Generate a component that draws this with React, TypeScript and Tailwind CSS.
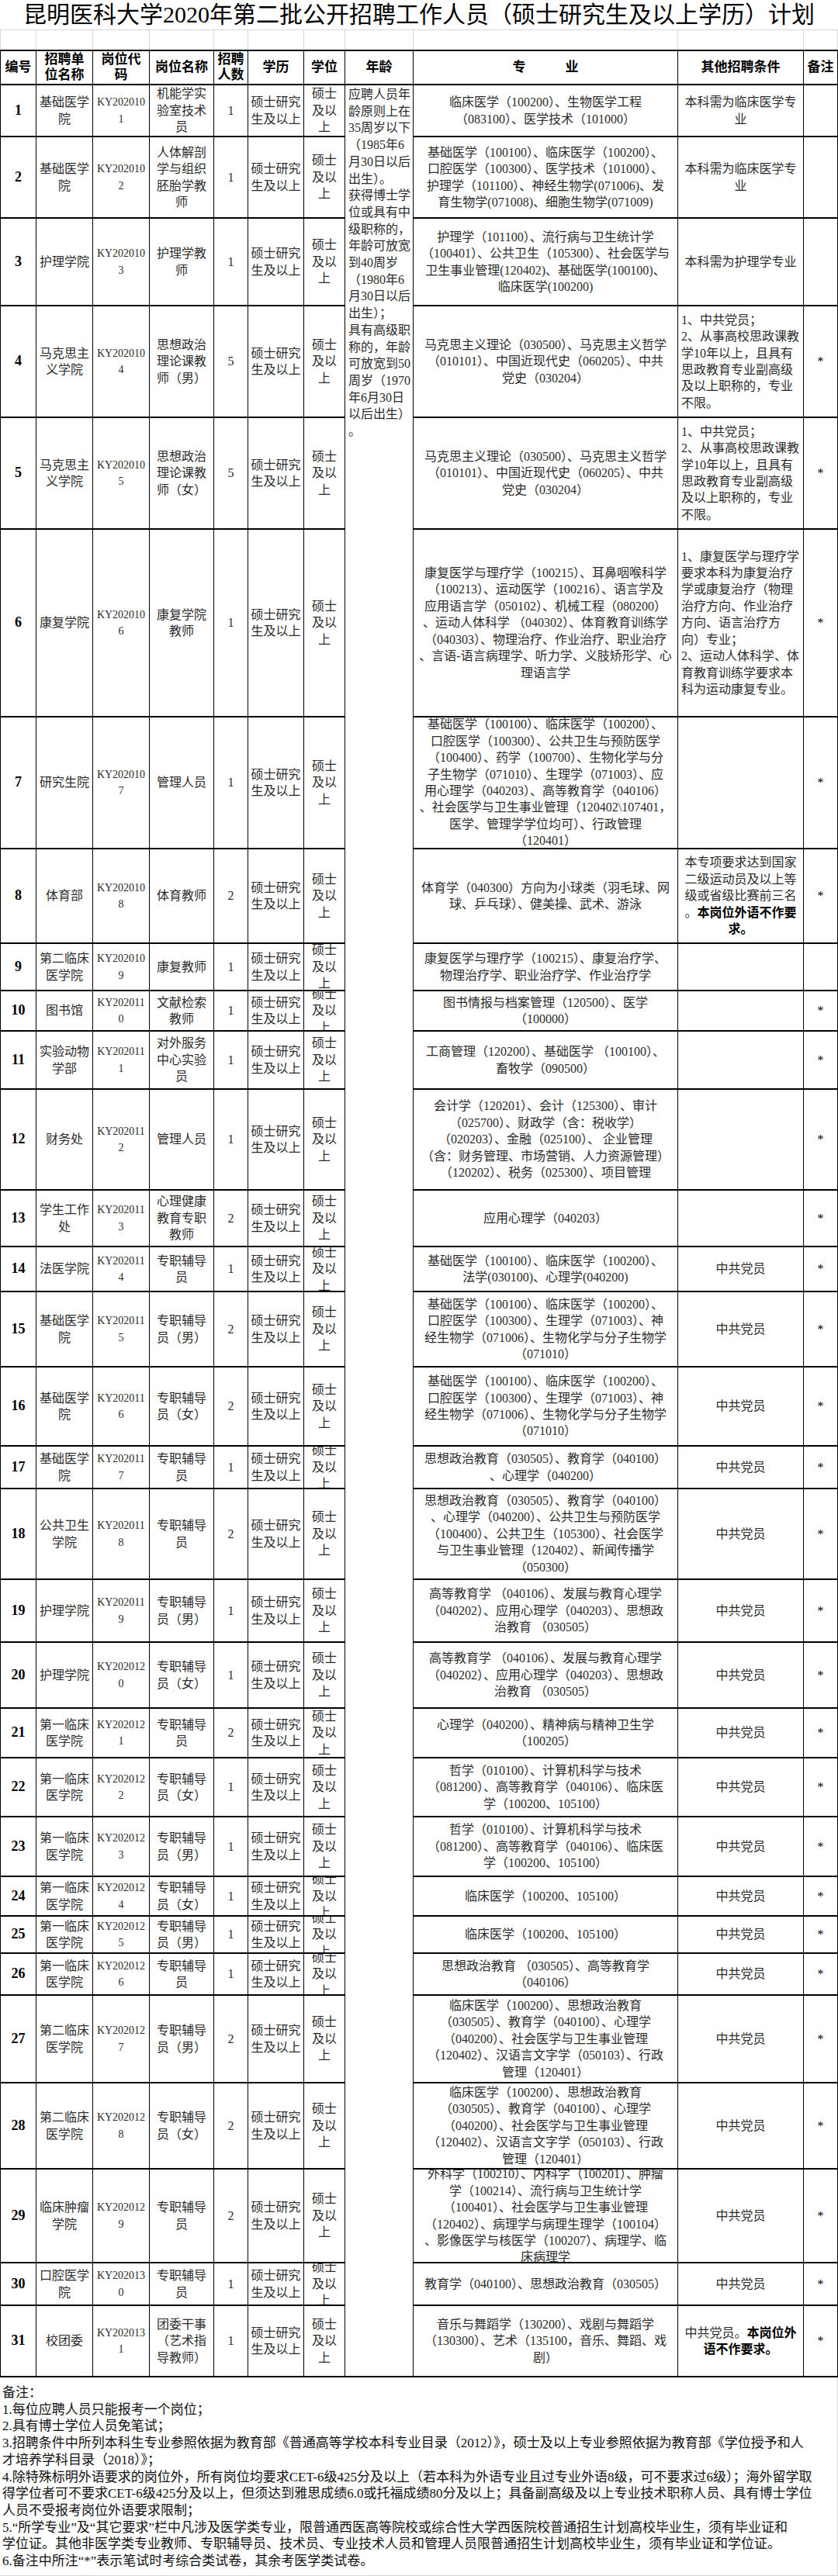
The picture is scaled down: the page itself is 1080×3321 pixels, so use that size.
import type { ReactNode } from "react";

type Post = {
  no: number;
  unit: string[];
  code: string[];
  name: string[];
  count: number;
  major: string[];
  other?: ReactNode[];
  otherLeft?: boolean;
  star?: boolean;
};

const EDU = ["硕士研究", "生及以上"];
const DEGREE = ["硕士", "及以", "上"];

const AGE_LINES = [
  "应聘人员年",
  "龄原则上在",
  "35周岁以下",
  "（1985年6",
  "月30日以后",
  "出生）。",
  "获得博士学",
  "位或具有中",
  "级职称的，",
  "年龄可放宽",
  "到40周岁",
  "（1980年6",
  "月30日以后",
  "出生）；",
  "具有高级职",
  "称的，年龄",
  "可放宽到50",
  "周岁（1970",
  "年6月30日",
  "以后出生）",
  "。",
];

const SZ_LEFT = [
  "1、中共党员；",
  "2、从事高校思政课教",
  "学10年以上，且具有",
  "思政教育专业副高级",
  "及以上职称的，专业",
  "不限。",
];

const MAKESI = [
  "马克思主义理论（030500）、马克思主义哲学",
  "（010101）、中国近现代史（060205）、中共",
  "党史（030204）",
];

const JICHU = [
  "基础医学（100100）、临床医学（100200）、",
  "口腔医学（100300）、生理学（071003）、神",
  "经生物学（071006）、生物化学与分子生物学",
  "（071010）",
];

const GAODENG = [
  "高等教育学 （040106）、发展与教育心理学",
  "（040202）、应用心理学（040203）、思想政",
  "治教育 （030505）",
];

const ZHEXUE = [
  "哲学（010100）、计算机科学与技术",
  "（081200）、高等教育学（040106）、临床医",
  "学（100200、105100）",
];

const ERLIN = [
  "临床医学（100200）、思想政治教育",
  "（030505）、教育学（040100）、心理学",
  "（040200）、社会医学与卫生事业管理",
  "（120402）、汉语言文字学（050103）、行政",
  "管理（120401）",
];

const DANG = ["中共党员"];

const POSTS: Post[] = [
  {
    no: 1,
    unit: ["基础医学", "院"],
    code: ["KY202010", "1"],
    name: ["机能学实", "验室技术", "员"],
    count: 1,
    major: ["临床医学（100200）、生物医学工程", "（083100）、医学技术（101000）"],
    other: ["本科需为临床医学专", "业"],
  },
  {
    no: 2,
    unit: ["基础医学", "院"],
    code: ["KY202010", "2"],
    name: ["人体解剖", "学与组织", "胚胎学教", "师"],
    count: 1,
    major: [
      "基础医学（100100）、临床医学（100200）、",
      "口腔医学（100300）、医学技术（101000）、",
      "护理学（101100）、神经生物学(071006)、发",
      "育生物学(071008)、细胞生物学(071009)",
    ],
    other: ["本科需为临床医学专", "业"],
  },
  {
    no: 3,
    unit: ["护理学院"],
    code: ["KY202010", "3"],
    name: ["护理学教", "师"],
    count: 1,
    major: [
      "护理学（101100）、流行病与卫生统计学",
      "（100401）、公共卫生（105300）、社会医学与",
      "卫生事业管理(120402)、基础医学(100100)、",
      "临床医学(100200)",
    ],
    other: ["本科需为护理学专业"],
  },
  {
    no: 4,
    unit: ["马克思主", "义学院"],
    code: ["KY202010", "4"],
    name: ["思想政治", "理论课教", "师（男）"],
    count: 5,
    major: MAKESI,
    other: SZ_LEFT,
    otherLeft: true,
    star: true,
  },
  {
    no: 5,
    unit: ["马克思主", "义学院"],
    code: ["KY202010", "5"],
    name: ["思想政治", "理论课教", "师（女）"],
    count: 5,
    major: MAKESI,
    other: SZ_LEFT,
    otherLeft: true,
    star: true,
  },
  {
    no: 6,
    unit: ["康复学院"],
    code: ["KY202010", "6"],
    name: ["康复学院", "教师"],
    count: 1,
    major: [
      "康复医学与理疗学（100215）、耳鼻咽喉科学",
      "（100213）、运动医学（100216）、语言学及",
      "应用语言学（050102）、机械工程（080200）",
      "、运动人体科学 （040302）、体育教育训练学",
      "（040303）、物理治疗、作业治疗、职业治疗",
      "、言语-语言病理学、听力学、义肢矫形学、心",
      "理语言学",
    ],
    other: [
      "1、康复医学与理疗学",
      "要求本科为康复治疗",
      "学或康复治疗（物理",
      "治疗方向、作业治疗",
      "方向、语言治疗方",
      "向）专业；",
      "2、运动人体科学、体",
      "育教育训练学要求本",
      "科为运动康复专业。",
    ],
    otherLeft: true,
    star: true,
  },
  {
    no: 7,
    unit: ["研究生院"],
    code: ["KY202010", "7"],
    name: ["管理人员"],
    count: 1,
    major: [
      "基础医学（100100）、临床医学（100200）、",
      "口腔医学（100300）、公共卫生与预防医学",
      "（100400）、药学（100700）、生物化学与分",
      "子生物学（071010）、生理学（071003）、应",
      "用心理学（040203）、高等教育学（040106）",
      "、社会医学与卫生事业管理（120402\\107401，",
      "医学、管理学学位均可）、行政管理",
      "（120401）",
    ],
    star: true,
  },
  {
    no: 8,
    unit: ["体育部"],
    code: ["KY202010", "8"],
    name: ["体育教师"],
    count: 2,
    major: ["体育学（040300）方向为小球类（羽毛球、网", "球、乒乓球）、健美操、武术、游泳"],
    other: [
      "本专项要求达到国家",
      "二级运动员及以上等",
      "级或省级比赛前三名",
      <>
        。<b className="font-bold text-black">本岗位外语不作要</b>
      </>,
      <b className="font-bold text-black">求。</b>,
    ],
    star: true,
  },
  {
    no: 9,
    unit: ["第二临床", "医学院"],
    code: ["KY202010", "9"],
    name: ["康复教师"],
    count: 1,
    major: ["康复医学与理疗学（100215）、康复治疗学、", "物理治疗学、职业治疗学、作业治疗学"],
  },
  {
    no: 10,
    unit: ["图书馆"],
    code: ["KY202011", "0"],
    name: ["文献检索", "教师"],
    count: 1,
    major: ["图书情报与档案管理（120500）、医学", "（100000）"],
    star: true,
  },
  {
    no: 11,
    unit: ["实验动物", "学部"],
    code: ["KY202011", "1"],
    name: ["对外服务", "中心实验", "员"],
    count: 1,
    major: ["工商管理（120200）、基础医学 （100100）、", "畜牧学（090500）"],
    star: true,
  },
  {
    no: 12,
    unit: ["财务处"],
    code: ["KY202011", "2"],
    name: ["管理人员"],
    count: 1,
    major: [
      "会计学（120201）、会计（125300）、审计",
      "（025700）、财政学（含：税收学）",
      "（020203）、金融（025100）、 企业管理",
      "（含：财务管理、市场营销、人力资源管理）",
      "（120202）、税务（025300）、项目管理",
    ],
    star: true,
  },
  {
    no: 13,
    unit: ["学生工作", "处"],
    code: ["KY202011", "3"],
    name: ["心理健康", "教育专职", "教师"],
    count: 2,
    major: ["应用心理学（040203）"],
    star: true,
  },
  {
    no: 14,
    unit: ["法医学院"],
    code: ["KY202011", "4"],
    name: ["专职辅导", "员"],
    count: 1,
    major: ["基础医学（100100）、临床医学（100200）、", "法学(030100)、心理学(040200)"],
    other: DANG,
    star: true,
  },
  {
    no: 15,
    unit: ["基础医学", "院"],
    code: ["KY202011", "5"],
    name: ["专职辅导", "员（男）"],
    count: 2,
    major: JICHU,
    other: DANG,
    star: true,
  },
  {
    no: 16,
    unit: ["基础医学", "院"],
    code: ["KY202011", "6"],
    name: ["专职辅导", "员（女）"],
    count: 2,
    major: JICHU,
    other: DANG,
    star: true,
  },
  {
    no: 17,
    unit: ["基础医学", "院"],
    code: ["KY202011", "7"],
    name: ["专职辅导", "员"],
    count: 1,
    major: ["思想政治教育（030505）、教育学（040100）", "、心理学（040200）"],
    other: DANG,
    star: true,
  },
  {
    no: 18,
    unit: ["公共卫生", "学院"],
    code: ["KY202011", "8"],
    name: ["专职辅导", "员"],
    count: 2,
    major: [
      "思想政治教育（030505）、教育学（040100）",
      "、心理学（040200）、公共卫生与预防医学",
      "（100400）、公共卫生（105300）、社会医学",
      "与卫生事业管理（120402）、新闻传播学",
      "（050300）",
    ],
    other: DANG,
    star: true,
  },
  {
    no: 19,
    unit: ["护理学院"],
    code: ["KY202011", "9"],
    name: ["专职辅导", "员（男）"],
    count: 1,
    major: GAODENG,
    other: DANG,
    star: true,
  },
  {
    no: 20,
    unit: ["护理学院"],
    code: ["KY202012", "0"],
    name: ["专职辅导", "员（女）"],
    count: 1,
    major: GAODENG,
    other: DANG,
    star: true,
  },
  {
    no: 21,
    unit: ["第一临床", "医学院"],
    code: ["KY202012", "1"],
    name: ["专职辅导", "员"],
    count: 2,
    major: ["心理学（040200）、精神病与精神卫生学", "（100205）"],
    other: DANG,
    star: true,
  },
  {
    no: 22,
    unit: ["第一临床", "医学院"],
    code: ["KY202012", "2"],
    name: ["专职辅导", "员（女）"],
    count: 1,
    major: ZHEXUE,
    other: DANG,
    star: true,
  },
  {
    no: 23,
    unit: ["第一临床", "医学院"],
    code: ["KY202012", "3"],
    name: ["专职辅导", "员（男）"],
    count: 1,
    major: ZHEXUE,
    other: DANG,
    star: true,
  },
  {
    no: 24,
    unit: ["第一临床", "医学院"],
    code: ["KY202012", "4"],
    name: ["专职辅导", "员（女）"],
    count: 1,
    major: ["临床医学（100200、105100）"],
    other: DANG,
    star: true,
  },
  {
    no: 25,
    unit: ["第一临床", "医学院"],
    code: ["KY202012", "5"],
    name: ["专职辅导", "员（男）"],
    count: 1,
    major: ["临床医学（100200、105100）"],
    other: DANG,
    star: true,
  },
  {
    no: 26,
    unit: ["第一临床", "医学院"],
    code: ["KY202012", "6"],
    name: ["专职辅导", "员"],
    count: 1,
    major: ["思想政治教育 （030505）、高等教育学", "（040106）"],
    other: DANG,
    star: true,
  },
  {
    no: 27,
    unit: ["第二临床", "医学院"],
    code: ["KY202012", "7"],
    name: ["专职辅导", "员（男）"],
    count: 2,
    major: ERLIN,
    other: DANG,
    star: true,
  },
  {
    no: 28,
    unit: ["第二临床", "医学院"],
    code: ["KY202012", "8"],
    name: ["专职辅导", "员（女）"],
    count: 2,
    major: ERLIN,
    other: DANG,
    star: true,
  },
  {
    no: 29,
    unit: ["临床肿瘤", "学院"],
    code: ["KY202012", "9"],
    name: ["专职辅导", "员"],
    count: 2,
    major: [
      "外科学（100210）、内科学（100201）、肿瘤",
      "学（100214）、流行病与卫生统计学",
      "（100401）、社会医学与卫生事业管理",
      "（120402）、病理学与病理生理学（100104）",
      "、影像医学与核医学（100207）、病理学、临",
      "床病理学",
    ],
    other: DANG,
    star: true,
  },
  {
    no: 30,
    unit: ["口腔医学", "院"],
    code: ["KY202013", "0"],
    name: ["专职辅导", "员"],
    count: 1,
    major: ["教育学（040100）、思想政治教育（030505）"],
    other: DANG,
    star: true,
  },
  {
    no: 31,
    unit: ["校团委"],
    code: ["KY202013", "1"],
    name: ["团委干事", "（艺术指", "导教师）"],
    count: 1,
    major: [
      "音乐与舞蹈学（130200）、戏剧与舞蹈学",
      "（130300）、艺术（135100，音乐、舞蹈、戏",
      "剧）",
    ],
    other: [
      <>
        中共党员。<b className="font-bold text-black">本岗位外</b>
      </>,
      <b className="font-bold text-black">语不作要求。</b>,
    ],
    star: true,
  },
];

const HEADERS: string[][] = [
  ["编号"],
  ["招聘单", "位名称"],
  ["岗位代", "码"],
  ["岗位名称"],
  ["招聘", "人数"],
  ["学历"],
  ["学位"],
  ["年龄"],
  ["专　　　业"],
  ["其他招聘条件"],
  ["备注"],
];

const NOTES = [
  "备注：",
  "1.每位应聘人员只能报考一个岗位；",
  "2.具有博士学位人员免笔试；",
  "3.招聘条件中所列本科生专业参照依据为教育部《普通高等学校本科专业目录（2012）》，硕士及以上专业参照依据为教育部《学位授予和人",
  "才培养学科目录（2018）》；",
  "4.除特殊标明外语要求的岗位外，所有岗位均要求CET-6级425分及以上（若本科为外语专业且过专业外语8级，可不要求过6级）；海外留学取",
  "得学位者可不要求CET-6级425分及以上，但须达到雅思成绩6.0或托福成绩80分及以上；具备副高级及以上专业技术职称人员、具有博士学位",
  "人员不受报考岗位外语要求限制；",
  "5.“所学专业”及“其它要求”栏中凡涉及医学类专业，限普通西医高等院校或综合性大学西医院校普通招生计划高校毕业生，须有毕业证和",
  "学位证。其他非医学类专业教师、专职辅导员、技术员、专业技术人员和管理人员限普通招生计划高校毕业生，须有毕业证和学位证。",
  "6.备注中所注“*”表示笔试时考综合类试卷，其余考医学类试卷。",
];

function Lines({ lines }: { lines: ReactNode[] }) {
  return (
    <>
      {lines.map((l, i) => (
        <div key={i} className="whitespace-pre">
          {l}
        </div>
      ))}
    </>
  );
}

function Cell({ children, left = false, className = "" }: { children?: ReactNode; left?: boolean; className?: string }) {
  return (
    <div
      className={`bg-white overflow-hidden flex flex-col justify-center ${
        left ? "items-start pl-[4px] text-left" : "items-center text-center"
      } ${className}`}
    >
      {children}
    </div>
  );
}

function PostRow({ post }: { post: Post }) {
  return (
    <>
      <Cell className="text-[18px] font-bold text-black">{post.no}</Cell>
      <Cell>
        <Lines lines={post.unit} />
      </Cell>
      <Cell className="text-[14px]">
        <Lines lines={post.code} />
      </Cell>
      <Cell>
        <Lines lines={post.name} />
      </Cell>
      <Cell>{post.count}</Cell>
      <Cell>
        <Lines lines={EDU} />
      </Cell>
      <Cell>
        <Lines lines={DEGREE} />
      </Cell>
      <Cell>
        <Lines lines={post.major} />
      </Cell>
      <Cell left={post.otherLeft}>{post.other && <Lines lines={post.other} />}</Cell>
      <Cell className="text-black">{post.star ? "*" : ""}</Cell>
    </>
  );
}

export default function App() {
  return (
    <div className="w-[1080px] bg-white font-['Liberation_Serif','Noto_Sans_CJK_SC',serif] text-[#2b2b2b]">
      {/* title */}
      <div className="h-[39px] border-b border-[#d6d6d6] flex items-center justify-center text-[30px] leading-[38px] text-black whitespace-nowrap">
        昆明医科大学2020年第二批公开招聘工作人员（硕士研究生及以上学历）计划
      </div>

      {/* empty spreadsheet row */}
      <div className="grid h-[25px] grid-cols-[45px_72px_72px_82px_43px_71px_52px_87px_340px_161px_43px] gap-x-px bg-[#d6d6d6] px-px">
        {Array.from({ length: 11 }).map((_, i) => (
          <div key={i} className="bg-white" />
        ))}
      </div>

      {/* table */}
      <div className="grid grid-cols-[45px_72px_72px_82px_43px_71px_52px_87px_340px_161px_43px] grid-rows-[42px_65px_103px_111px_142px_142px_240px_168px_120px_59px_50px_73px_128px_71px_56px_95px_100px_53px_115px_79px_83px_62px_74px_75px_49px_46px_52px_111px_109px_119px_53px_90px] gap-x-px gap-y-[2px] bg-black px-px py-[2px] text-[16px] leading-[21.4px]">
        {HEADERS.map((h, i) => (
          <Cell key={i} className="text-[17px] leading-[20px] font-bold text-black">
            <Lines lines={h} />
          </Cell>
        ))}

        <div className="col-start-8 row-start-2 row-span-31 bg-white pl-[4px] pt-[1px] leading-[21.7px]">
          <Lines lines={AGE_LINES} />
        </div>

        {POSTS.map((p) => (
          <PostRow key={p.no} post={p} />
        ))}
      </div>

      {/* notes */}
      <div className="h-[256px] border-r border-b border-[#d6d6d6] pl-[3px] pt-[9px] text-[17px] leading-[21.7px] text-[#111]">
        {NOTES.map((n, i) => (
          <div key={i} className="whitespace-nowrap">
            {n}
          </div>
        ))}
      </div>
    </div>
  );
}
